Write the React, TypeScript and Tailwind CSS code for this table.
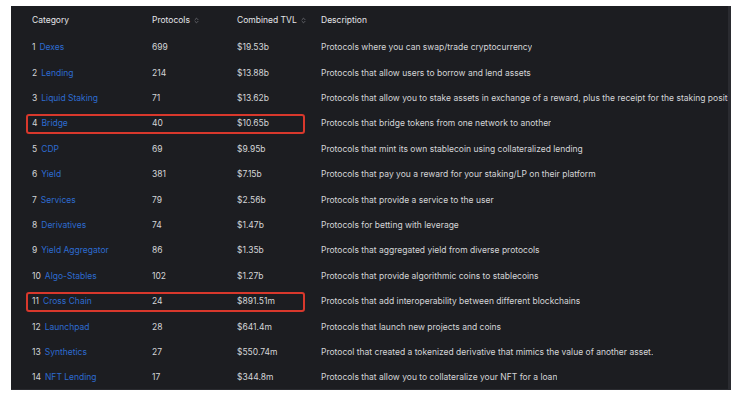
import { ChevronsUpDown } from "lucide-react";

type Row = {
  name: string;
  protocols: number;
  tvl: string;
  description: string;
  marked?: boolean;
};

const rows: Row[] = [
  { name: "Dexes", protocols: 699, tvl: "$19.53b", description: "Protocols where you can swap/trade cryptocurrency" },
  { name: "Lending", protocols: 214, tvl: "$13.88b", description: "Protocols that allow users to borrow and lend assets" },
  { name: "Liquid Staking", protocols: 71, tvl: "$13.62b", description: "Protocols that allow you to stake assets in exchange of a reward, plus the receipt for the staking position" },
  { name: "Bridge", protocols: 40, tvl: "$10.65b", description: "Protocols that bridge tokens from one network to another", marked: true },
  { name: "CDP", protocols: 69, tvl: "$9.95b", description: "Protocols that mint its own stablecoin using collateralized lending" },
  { name: "Yield", protocols: 381, tvl: "$7.15b", description: "Protocols that pay you a reward for your staking/LP on their platform" },
  { name: "Services", protocols: 79, tvl: "$2.56b", description: "Protocols that provide a service to the user" },
  { name: "Derivatives", protocols: 74, tvl: "$1.47b", description: "Protocols for betting with leverage" },
  { name: "Yield Aggregator", protocols: 86, tvl: "$1.35b", description: "Protocols that aggregated yield from diverse protocols" },
  { name: "Algo-Stables", protocols: 102, tvl: "$1.27b", description: "Protocols that provide algorithmic coins to stablecoins" },
  { name: "Cross Chain", protocols: 24, tvl: "$891.51m", description: "Protocols that add interoperability between different blockchains", marked: true },
  { name: "Launchpad", protocols: 28, tvl: "$641.4m", description: "Protocols that launch new projects and coins" },
  { name: "Synthetics", protocols: 27, tvl: "$550.74m", description: "Protocol that created a tokenized derivative that mimics the value of another asset." },
  { name: "NFT Lending", protocols: 17, tvl: "$344.8m", description: "Protocols that allow you to collateralize your NFT for a loan" },
];

function SortIcon() {
  return <ChevronsUpDown className="ml-[3px] h-[7px] w-[7px] text-[#6b6d73]" strokeWidth={3} />;
}

export default function App() {
  return (
    <div className="h-[399px] w-[739px] bg-white pl-[11px] pt-[6px] font-['Inter',sans-serif]">
      <div className="h-[384px] w-[720px] overflow-hidden border-r-[3px] border-b border-[#2a2b30] bg-[#1c1d21] text-[8.5px] text-[#d4d5d8]">
        <div className="flex h-[29px] items-center pl-[21px] text-[#e4e5e8]">
          <div className="w-[120px]">Category</div>
          <div className="flex w-[85px] items-center">
            Protocols
            <SortIcon />
          </div>
          <div className="flex w-[84px] items-center">
            Combined TVL
            <SortIcon />
          </div>
          <div>Description</div>
        </div>
        {rows.map((row, i) => (
          <div key={row.name} className="flex h-[25.4px] items-center pl-[15px] whitespace-nowrap">
            <div
              className={
                "flex h-[20px] w-[279px] shrink-0 items-center rounded-[3px] border-2 pl-[4px] " +
                (row.marked ? "border-[#d8382c]" : "border-transparent")
              }
            >
              <div className="w-[120px]">
                <span>{i + 1}</span>
                <span className="ml-[4px] text-[#2d6bd0]">{row.name}</span>
              </div>
              <div className="w-[85px]">{row.protocols}</div>
              <div>{row.tvl}</div>
            </div>
            <div className="ml-[16px] overflow-hidden">{row.description}</div>
          </div>
        ))}
      </div>
    </div>
  );
}
